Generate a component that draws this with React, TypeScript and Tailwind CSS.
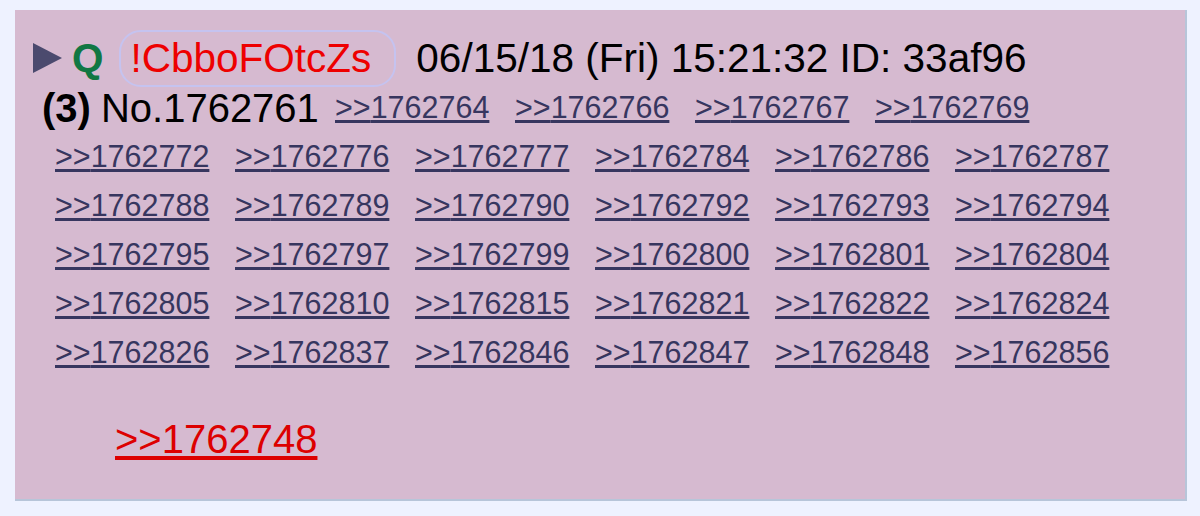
import React from 'react'

const replies = [
  '1762764', '1762766', '1762767', '1762769',
  '1762772', '1762776', '1762777', '1762784', '1762786', '1762787',
  '1762788', '1762789', '1762790', '1762792', '1762793', '1762794',
  '1762795', '1762797', '1762799', '1762800', '1762801', '1762804',
  '1762805', '1762810', '1762815', '1762821', '1762822', '1762824',
  '1762826', '1762837', '1762846', '1762847', '1762848', '1762856',
]

export default function App() {
  return (
    <div className="min-h-screen bg-[#eef2ff] pt-[10px] pl-[15px] font-['Liberation_Sans',Arial,sans-serif]">
      <div className="w-[1172px] h-[491px] bg-[#d6bad0] border-r-2 border-b-2 border-[#b7c5d9] pt-[23px]">
        {/* Header */}
        <div className="flex items-center h-[50px] pl-[18px] text-[40.5px] leading-none">
          <svg width="29" height="30" viewBox="0 0 29 30" className="shrink-0">
            <polygon points="0,0 29,15 0,30" fill="#4b4a6e" />
          </svg>
          <span className="ml-[10px] font-bold text-[#117743]">Q</span>
          <span className="ml-[15px] h-[57px] flex items-center rounded-[22px] border-2 border-[#c5c3f0] pl-[10px] pr-[23px] text-[#ee0000]">
            !CbboFOtcZs
          </span>
          <span className="ml-[20px] text-black">06/15/18 (Fri) 15:21:32 ID: 33af96</span>
        </div>

        {/* Post number + backlinks */}
        <div className="ml-[27px] w-[1100px] flex flex-wrap">
          <div className="w-[280px] h-[49px] flex items-center text-[40px] leading-none text-black">
            <span className="font-bold">(3)</span>
            <span className="ml-[10px]">No.1762761</span>
          </div>
          {replies.map((r) => (
            <div key={r} className="w-[180px] h-[49px] flex items-center pl-[13px]">
              <a className="text-[30.5px] leading-none text-[#37365f] underline decoration-[3px] underline-offset-[2px]">
                &gt;&gt;{r}
              </a>
            </div>
          ))}
        </div>

        {/* Body */}
        <div className="mt-[39px] pl-[100px]">
          <a className="text-[40px] leading-[46px] text-[#dd0000] underline decoration-[4px] underline-offset-[3px]">
            &gt;&gt;1762748
          </a>
        </div>
      </div>
    </div>
  )
}
